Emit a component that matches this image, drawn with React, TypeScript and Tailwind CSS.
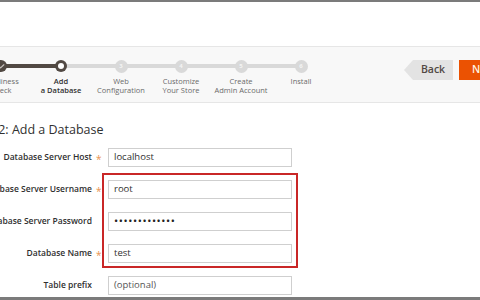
import { Check } from "lucide-react";

const steps = [
  { top: "Readiness", bottom: "Check" },
  { top: "Add", bottom: "a Database" },
  { top: "Web", bottom: "Configuration" },
  { top: "Customize", bottom: "Your Store" },
  { top: "Create", bottom: "Admin Account" },
  { top: "Install", bottom: "" },
];

const fields = [
  { label: "Database Server Host", required: true, value: "localhost" },
  { label: "Database Server Username", required: true, value: "root" },
  { label: "Database Server Password", required: false, value: "•••••••••••••", secret: true },
  { label: "Database Name", required: true, value: "test" },
  { label: "Table prefix", required: false, value: "(optional)", muted: true },
];

function StepDot({ index }: { index: number }) {
  if (index === 0)
    return (
      <div className="w-[12px] h-[12px] rounded-full bg-[#514943] flex items-center justify-center">
        <Check size={7} strokeWidth={4} className="text-[#c8c3bf]" />
      </div>
    );
  if (index === 1)
    return (
      <div className="w-[12px] h-[12px] rounded-full bg-[#514943] flex items-center justify-center">
        <div className="w-[6px] h-[6px] rounded-full bg-white" />
      </div>
    );
  return (
    <div className="w-[13px] h-[13px] rounded-full bg-[#d9d9d9] flex items-center justify-center text-[6px] leading-none text-[#f4f4f4] font-bold">
      {index + 1}
    </div>
  );
}

export default function App() {
  return (
    <div className="w-[480px] h-[300px] overflow-hidden bg-white flex flex-col" style={{ fontFamily: '"Open Sans", sans-serif' }}>
      <div className="h-[2px] bg-[#7b7b7b] shrink-0" />
      <div className="h-[44px] shrink-0" />

      <div className="h-[57px] shrink-0 bg-[#f8f8f8] border-y border-[#e6e6e6] flex items-start relative">
        <div className="relative ml-[-29px] flex">
          <div className="absolute top-[17px] left-[30px] w-[60px] h-[4px] bg-[#514943]" />
          <div className="absolute top-[17px] left-[90px] w-[240px] h-[4px] bg-[#d9d9d9]" />
          {steps.map((s, i) => (
            <div key={i} className="w-[60px] flex flex-col items-center relative">
              <div className="h-[30px] flex items-start justify-center pt-[12px]">
                <div className={i < 2 ? "mt-[1px]" : "mt-[0.5px]"}>
                  <StepDot index={i} />
                </div>
              </div>
              <div className={`text-center text-[7.5px] leading-[8.5px] whitespace-nowrap ${i === 1 ? "text-[#303030] font-semibold" : "text-[#6b6b6b]"}`}>
                <div>{s.top}</div>
                <div>{s.bottom}</div>
              </div>
            </div>
          ))}
        </div>

        <div className="ml-auto mr-[-29px] mt-[13px] flex items-center">
          <div className="flex items-center">
            <div className="w-0 h-0 border-y-[10px] border-y-transparent border-r-[9px] border-r-[#e3e3e3]" />
            <div className="h-[20px] w-[40px] bg-[#e3e3e3] flex items-center justify-center text-[10.5px] font-semibold text-[#514943]">
              Back
            </div>
          </div>
          <div className="ml-[6px] h-[20px] w-[50px] bg-[#eb5202] flex items-center pl-[13px] text-[10.5px] font-semibold text-[#fff3e0]">
            Next
          </div>
        </div>
      </div>

      <div className="mt-[19px] ml-[-31px] text-[12.5px] leading-[16px] text-[#303030] whitespace-nowrap">
        Step 2: Add a Database
      </div>

      <div className="relative mt-[10px] flex flex-col gap-[13px]">
        <div className="absolute left-[102px] top-[25px] w-[196px] h-[95px] border-2 border-[#c92727]" />
        {fields.map((f) => (
          <div key={f.label} className="flex items-center h-[19px]">
            <div className="w-[92px] shrink-0 flex justify-end whitespace-nowrap text-[8.5px] font-semibold text-[#303030]">
              {f.label}
            </div>
            <div className="w-[16px] shrink-0 pl-[4px] pt-[2px] text-[10px] leading-none text-[#e8924f]">{f.required ? "*" : ""}</div>
            <div
              className={`w-[184px] h-[19px] border border-[#cfcfcf] bg-white flex items-center pl-[5px] ${
                f.secret ? "text-[11px] tracking-[0.6px] text-[#222]" : f.muted ? "text-[9.5px] text-[#555]" : "text-[9.5px] text-[#303030]"
              }`}
            >
              {f.value}
            </div>
          </div>
        ))}
      </div>

      <div className="mt-auto h-[3px] bg-[#7b7b7b] shrink-0" />
    </div>
  );
}
